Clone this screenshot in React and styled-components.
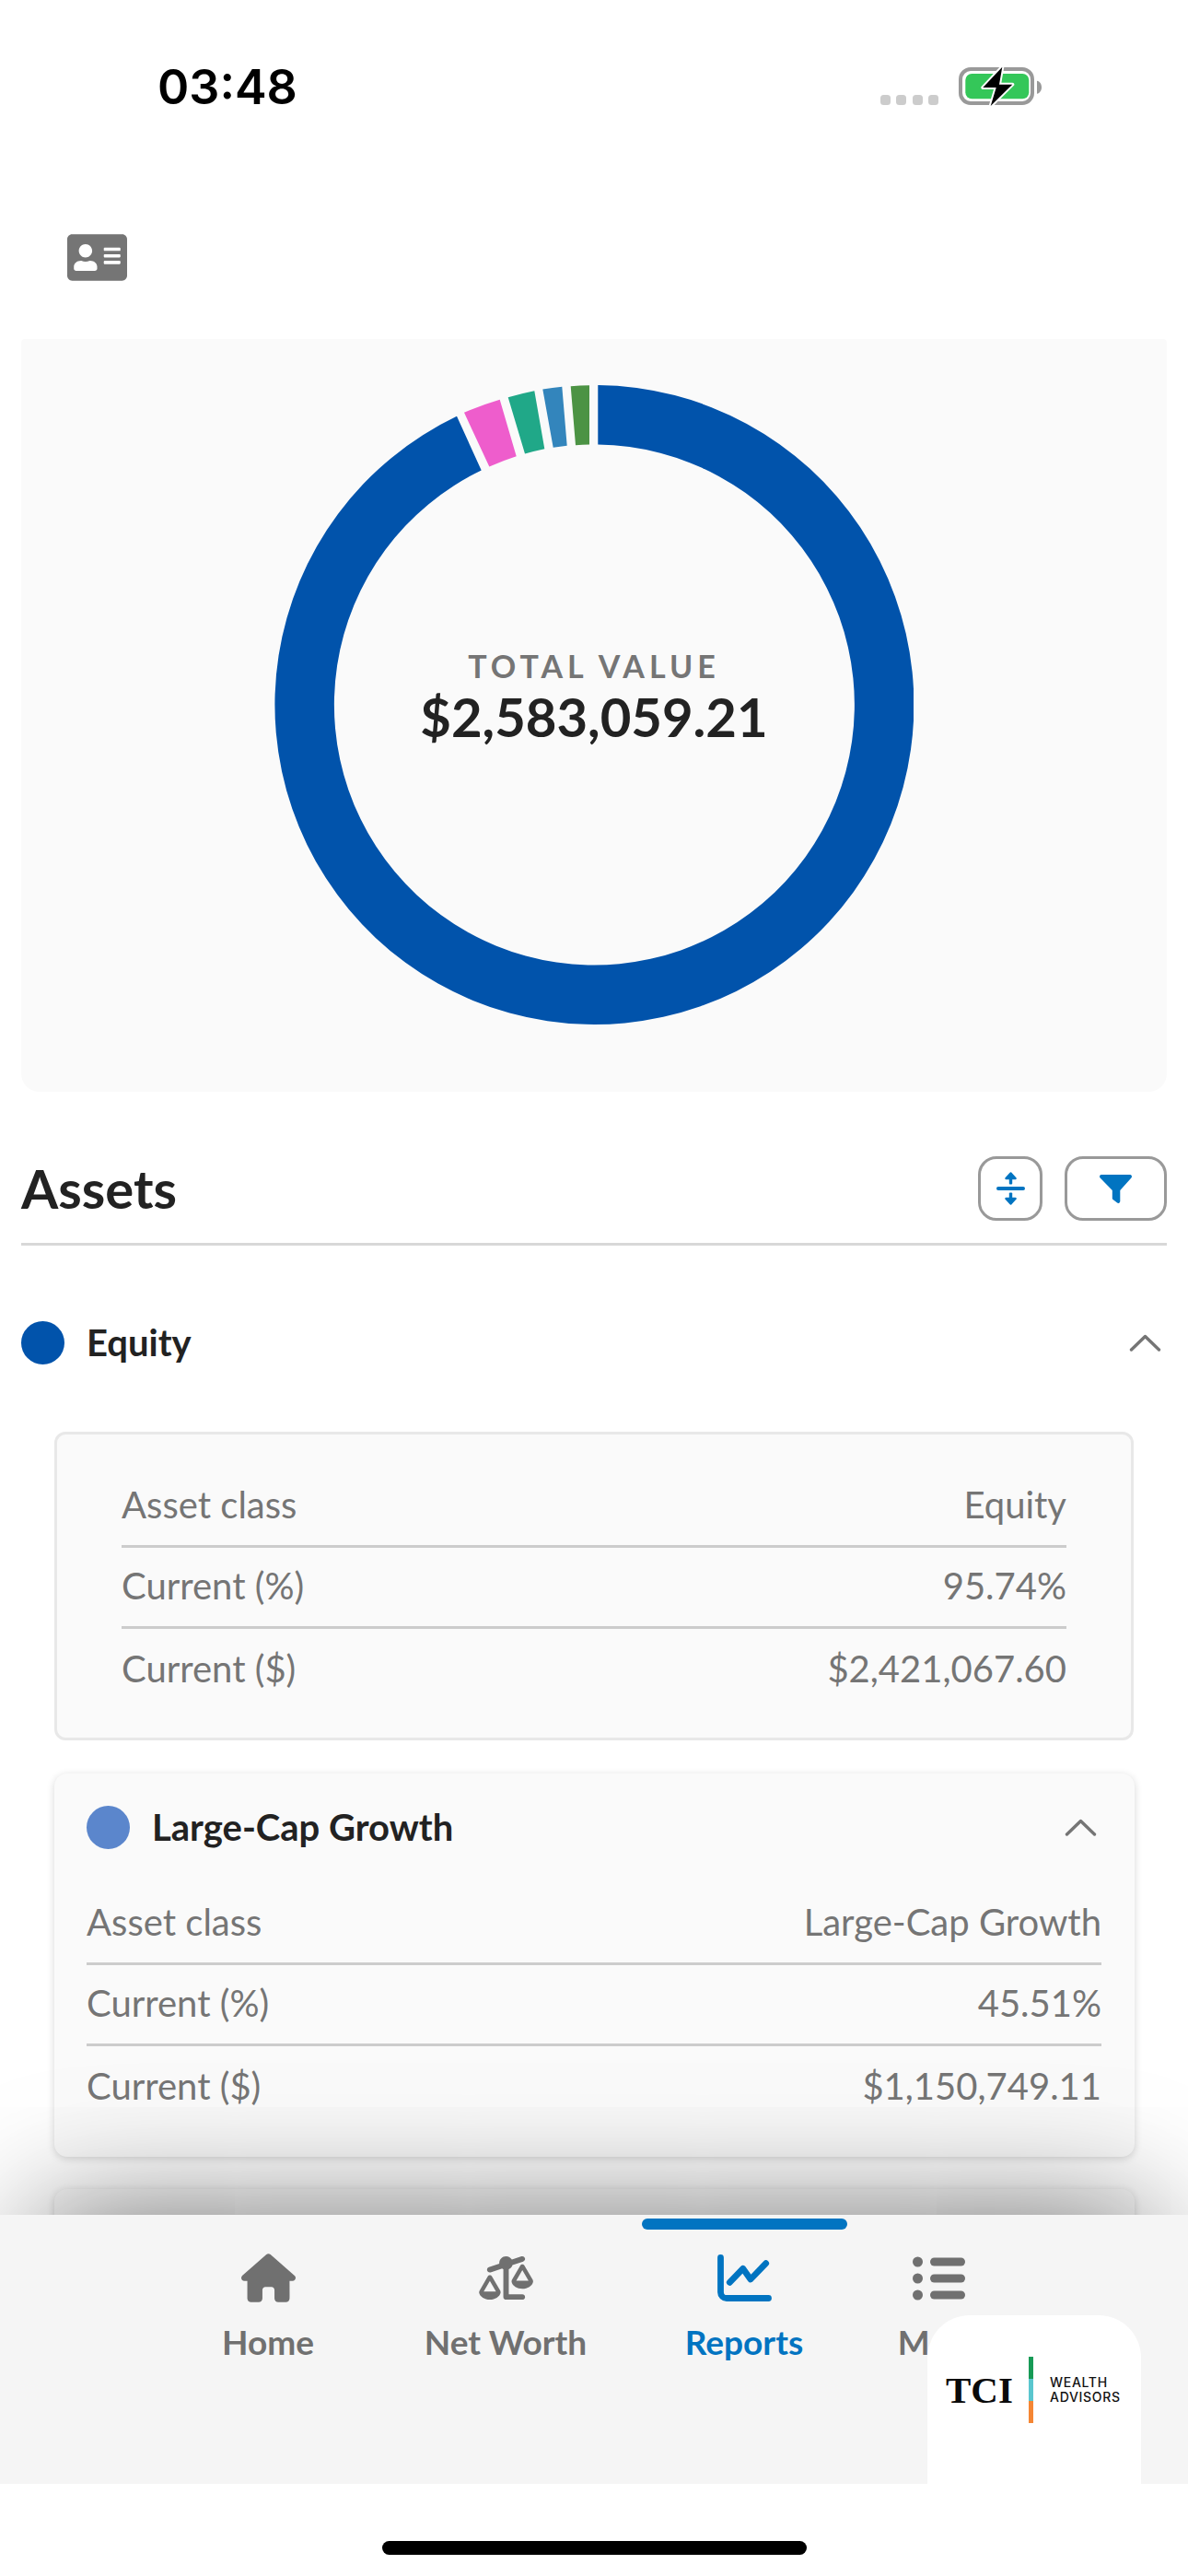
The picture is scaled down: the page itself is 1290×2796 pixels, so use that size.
import React from "react";
import styled, { createGlobalStyle } from "styled-components";
import { FaAddressCard } from "react-icons/fa";
import { FaHouse, FaScaleUnbalanced } from "react-icons/fa6";

const Global = createGlobalStyle`
  html, body { margin: 0; padding: 0; background: #fff; }
  * { box-sizing: border-box; }
`;

const Screen = styled.div`
  position: relative;
  width: 1290px;
  height: 2796px;
  overflow: hidden;
  background: #fff;
  font-family: Lato, "Liberation Sans", sans-serif;
`;

const StatusBar = styled.div`
  height: 190px;
  padding: 60px 159px 0 171px;
  display: flex;
  align-items: flex-start;
`;
const Time = styled.div`
  font-family: Inter, "Liberation Sans", sans-serif;
  font-weight: 600;
  font-size: 52px;
  line-height: 70px;
  color: #000;
  flex: 1;
`;
const Signal = styled.div`
  display: flex;
  gap: 6.5px;
  margin: 43px 22px 0 0;
`;
const SignalDot = styled.span`
  width: 11px;
  height: 11px;
  border-radius: 3.5px;
  background: #cccccc;
`;
const Battery = styled.svg`
  display: block;
  width: 90px;
  height: 44px;
  margin-top: 12px;
`;

const ContactRow = styled.div`
  padding: 57px 0 63px 73px;
  height: 178px;
  color: #757575;
  font-size: 65px;
  line-height: 0;
`;

const ChartPanel = styled.section`
  margin: 0 23px;
  height: 817px;
  padding-top: 49.5px;
  background: #fafafa;
  border-radius: 4px 4px 20px 20px;
  display: grid;
  justify-items: center;
  align-items: start;
`;
const Donut = styled.svg`
  grid-area: 1 / 1;
  display: block;
  width: 694px;
  height: 694px;
`;
const DonutCenter = styled.div`
  grid-area: 1 / 1;
  height: 694px;
  display: flex;
  flex-direction: column;
  align-items: center;
  justify-content: center;
`;
const TotalLabel = styled.div`
  font-size: 34px;
  line-height: 40px;
  font-weight: 700;
  letter-spacing: 5px;
  color: #757575;
  margin-top: -13px;
`;
const TotalValue = styled.div`
  font-size: 58px;
  line-height: 70px;
  font-weight: 700;
  color: #222222;
`;

const Section = styled.section`
  margin: 70px 23px 0;
`;
const AssetsHeader = styled.header`
  display: flex;
  align-items: center;
  padding-bottom: 24px;
  border-bottom: 3px solid #d8d8d8;
  gap: 24px;
`;
const AssetsTitle = styled.h1`
  flex: 1;
  margin: 0;
  font-size: 58px;
  line-height: 70px;
  font-weight: 700;
  color: #222222;
`;
const IconButton = styled.button`
  width: ${(p) => p.$width}px;
  height: 70px;
  padding: 0;
  background: #fff;
  border: 3px solid #999999;
  border-radius: 20px;
  display: flex;
  align-items: center;
  justify-content: center;
`;

const GroupHeader = styled.div`
  display: flex;
  align-items: center;
  gap: ${(p) => p.$gap}px;
  padding: ${(p) => p.$padding};
`;
const Dot = styled.span`
  flex: none;
  width: 47px;
  height: 47px;
  border-radius: 50%;
  background: ${(p) => p.$color};
`;
const GroupName = styled.div`
  flex: 1;
  font-size: 40px;
  line-height: 47px;
  font-weight: 700;
  color: #222222;
`;
const Chevron = styled.svg`
  display: block;
  width: 35px;
  height: 19px;
  flex: none;
`;

const SummaryCard = styled.div`
  margin: 0 36px 36px;
  padding: 35px 70px 33px;
  background: #fafafa;
  border: 3px solid #e8e8e8;
  border-radius: 12px;
`;
const DetailCard = styled.div`
  margin: 0 35px 35px 36px;
  padding: 35px 36px 35px 35px;
  background: #fafafa;
  border-radius: 14px;
  box-shadow: 0 2px 9px rgba(0, 0, 0, 0.16);
`;
const ClippedCard = styled(DetailCard)`
  height: 200px;
`;
const Rows = styled.div`
  margin-top: ${(p) => p.$top || 0}px;
`;
const Row = styled.div`
  height: 88px;
  display: flex;
  align-items: center;
  justify-content: space-between;
  padding-bottom: 3px;
  border-bottom: 3px solid #cccccc;
  font-size: 40px;
  color: #757575;
  &:last-child {
    height: 85px;
    padding-bottom: 0;
    border-bottom: 0;
  }
`;

const Dock = styled.div`
  position: absolute;
  left: 0;
  right: 0;
  bottom: 0;
  height: 392px;
  background: #fff;
  &::before {
    content: "";
    position: absolute;
    top: 0;
    left: 40px;
    right: 40px;
    height: 280px;
    box-shadow: 0 0 140px rgba(0, 0, 0, 0.55);
  }
`;
const Nav = styled.nav`
  position: relative;
  height: 292px;
  background: #f5f5f5;
  display: flex;
  padding-left: 162px;
  overflow: hidden;
`;
const NavItem = styled.div`
  position: relative;
  width: ${(p) => p.$width}px;
  display: flex;
  flex-direction: column;
  align-items: center;
  padding-top: 39px;
  color: ${(p) => (p.$active ? "#0174C1" : "#707070")};
`;
const NavIconBox = styled.div`
  height: 59px;
  display: flex;
  align-items: center;
  font-size: 59px;
`;
const NavLabel = styled.div`
  margin-top: 18px;
  font-size: 37px;
  line-height: 44px;
  font-weight: 700;
`;
const NavMark = styled.span`
  position: absolute;
  top: 4px;
  left: 19px;
  width: 223px;
  height: 12px;
  border-radius: 6px;
  background: #0174C1;
`;
const LogoCard = styled.div`
  position: absolute;
  top: 109px;
  left: 1007px;
  width: 232px;
  height: 183px;
  background: #fff;
  border-radius: 46px 46px 0 0;
  display: flex;
  align-items: center;
  padding: 0 0 22px 20px;
`;
const LogoTci = styled.div`
  font-family: "Liberation Serif", serif;
  font-weight: 700;
  font-size: 41px;
  line-height: 46px;
  color: #0a0a0a;
  width: 90px;
`;
const LogoBar = styled.div`
  width: 5px;
  height: 72px;
  background: linear-gradient(
    #179a56 0 33.3%,
    #5ac6ce 33.3% 66.6%,
    #f58634 66.6% 100%
  );
`;
const LogoWords = styled.div`
  margin-left: 18px;
  font-family: Inter, "Liberation Sans", sans-serif;
  font-weight: 500;
  font-size: 14px;
  line-height: 16px;
  letter-spacing: 0.7px;
  color: #111111;
`;
const HomeArea = styled.div`
  position: relative;
  height: 100px;
  background: #fff;
  display: flex;
  justify-content: center;
  padding-top: 62px;
`;
const HomeBar = styled.span`
  width: 461px;
  height: 15px;
  border-radius: 8px;
  background: #000;
`;

const ChevronUp = () => (
  <Chevron viewBox="0 0 35 19" fill="none" stroke="#757575" strokeWidth="3.4" strokeLinecap="round" strokeLinejoin="round">
    <path d="M2.5 17 17.5 2.5 32.5 17" />
  </Chevron>
);

const rows = (a, b, c) => [
  ["Asset class", a],
  ["Current (%)", b],
  ["Current ($)", c],
];

const DetailRows = ({ data, top }) => (
  <Rows $top={top}>
    {data.map(([k, v]) => (
      <Row key={k}>
        <span>{k}</span>
        <span>{v}</span>
      </Row>
    ))}
  </Rows>
);

const O = 347;
const I = 282.5;
const seg = (ox1, oy1, ox2, oy2, ix2, iy2, ix1, iy1, large = 0) =>
  `M${ox1} ${oy1}A${O} ${O} 0 ${large} 1 ${ox2} ${oy2}L${ix2} ${iy2}A${I} ${I} 0 ${large} 0 ${ix1} ${iy1}Z`;

const segments = [
  { c: "#0153AB", d: seg(649.3, 417.5, 496, 451.3, 522.7, 510, 649.3, 482, 1) },
  { c: "#EE5DCC", d: seg(504, 447.3, 542.7, 433.3, 560.7, 494.7, 531.3, 506) },
  { c: "#20A888", d: seg(551.7, 430.7, 580.3, 423.7, 591.3, 486.7, 570, 492) },
  { c: "#3385BC", d: seg(589.3, 422, 610.3, 419.3, 615.7, 483.3, 600.7, 485.3) },
  { c: "#4C9344", d: seg(619.7, 418.7, 640, 417.7, 640, 482, 625, 482.7) },
];

export default function App() {
  return (
    <Screen>
      <Global />
      <StatusBar>
        <Time>03:48</Time>
        <Signal>
          {[0, 1, 2, 3].map((i) => (
            <SignalDot key={i} />
          ))}
        </Signal>
        <Battery viewBox="0 -1 90 44">
          <rect x="2" y="2" width="78" height="37" rx="11" fill="none" stroke="#999" strokeWidth="4" />
          <rect x="7.3" y="7" width="69" height="27.3" rx="7" fill="#34C759" />
          <path d="M85 14.7c3 .6 5 3.4 5 7s-2 6.400-5 7z" fill="#999" />
          <path
            d="M47.300-.3 26.300 22H40.700L34.700 42 58.300 18.700H44Z"
            fill="#000"
            stroke="#fff"
            strokeWidth="4"
            strokeLinejoin="round"
            paintOrder="stroke"
          />
        </Battery>
      </StatusBar>
      <ContactRow>
        <FaAddressCard />
      </ContactRow>
      <ChartPanel>
        <Donut viewBox="298 417.5 694 694">
          {segments.map((s) => (
            <path key={s.c} d={s.d} fill={s.c} />
          ))}
        </Donut>
        <DonutCenter>
          <TotalLabel>TOTAL VALUE</TotalLabel>
          <TotalValue>$2,583,059.21</TotalValue>
        </DonutCenter>
      </ChartPanel>
      <Section>
        <AssetsHeader>
          <AssetsTitle>Assets</AssetsTitle>
          <IconButton $width={70} aria-label="Collapse">
            <svg width="31" height="36" viewBox="0 0 31 36" fill="#0174C1">
              <rect x="0" y="16" width="31" height="4" rx="2" />
              <path d="M15.500 1.500 20.500 7H10.500Z" stroke="#0174C1" strokeWidth="2.500" strokeLinejoin="round" />
              <rect x="13.800" y="6" width="3.400" height="7.500" rx="1" />
              <path d="M15.500 34.500 20.500 29H10.500Z" stroke="#0174C1" strokeWidth="2.500" strokeLinejoin="round" />
              <rect x="13.800" y="22.500" width="3.400" height="7.500" rx="1" />
            </svg>
          </IconButton>
          <IconButton $width={111} aria-label="Filter">
            <svg width="35" height="31" viewBox="0 0 35 31" fill="#0174C1">
              <path d="M2 0H33a2 2 0 0 1 1.400 3.400L22.300 17V29a2 2 0 0 1-3.200 1.500l-4.500-3.400a2 2 0 0 1-.8-1.600V17L.6 3.400A2 2 0 0 1 2 0z" />
            </svg>
          </IconButton>
        </AssetsHeader>
        <GroupHeader $gap={24} $padding="82px 6px 73px 0">
          <Dot $color="#0153AB" />
          <GroupName>Equity</GroupName>
          <ChevronUp />
        </GroupHeader>
        <SummaryCard>
          <DetailRows data={rows("Equity", "95.74%", "$2,421,067.60")} />
        </SummaryCard>
        <DetailCard>
          <GroupHeader $gap={24} $padding="0 5px 0 0">
            <Dot $color="#5B86CC" />
            <GroupName>Large-Cap Growth</GroupName>
            <ChevronUp />
          </GroupHeader>
          <DetailRows top={38} data={rows("Large-Cap Growth", "45.51%", "$1,150,749.11")} />
        </DetailCard>
        <ClippedCard />
      </Section>
      <Dock>
        <Nav>
          <NavItem $width={258}>
            <NavIconBox>
              <FaHouse />
            </NavIconBox>
            <NavLabel>Home</NavLabel>
          </NavItem>
          <NavItem $width={258}>
            <NavIconBox>
              <FaScaleUnbalanced />
            </NavIconBox>
            <NavLabel>Net Worth</NavLabel>
          </NavItem>
          <NavItem $width={260} $active>
            <NavMark />
            <NavIconBox>
              <svg width="59" height="51" viewBox="0 0 59 51" fill="none" stroke="#0174C1" strokeWidth="6.800" strokeLinecap="round" strokeLinejoin="round">
                <path d="M3.500 3.500V41a6.500 6.500 0 0 0 6.500 6.500H55.500" />
                <path d="M13.300 30.300 27.700 15.300 36 27 52.700 9.700" />
              </svg>
            </NavIconBox>
            <NavLabel>Reports</NavLabel>
          </NavItem>
          <NavItem $width={162}>
            <NavIconBox>
              <svg width="57" height="48" viewBox="0 0 57 48" fill="#707070">
                <circle cx="5.500" cy="6" r="5.500" />
                <circle cx="5.500" cy="24" r="5.500" />
                <circle cx="5.500" cy="42" r="5.500" />
                <rect x="19" y="1.500" width="38" height="9" rx="4.500" />
                <rect x="19" y="19.500" width="38" height="9" rx="4.500" />
                <rect x="19" y="37.500" width="38" height="9" rx="4.500" />
              </svg>
            </NavIconBox>
            <NavLabel>More</NavLabel>
          </NavItem>
          <LogoCard>
            <LogoTci>TCI</LogoTci>
            <LogoBar />
            <LogoWords>
              WEALTH
              <br />
              ADVISORS
            </LogoWords>
          </LogoCard>
        </Nav>
        <HomeArea>
          <HomeBar />
        </HomeArea>
      </Dock>
    </Screen>
  );
}
